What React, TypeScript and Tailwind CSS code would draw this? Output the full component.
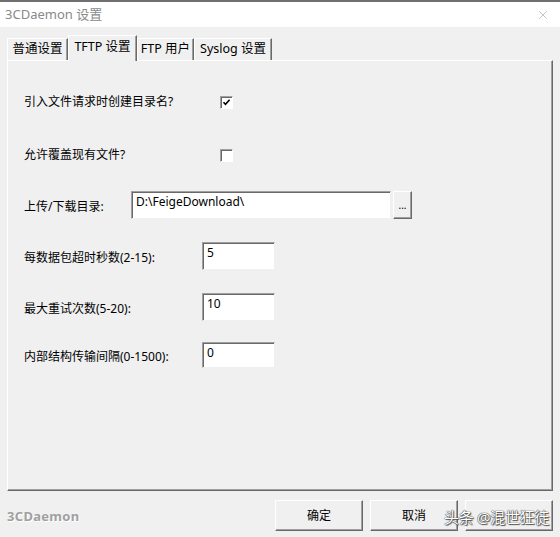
import { X } from 'lucide-react';

const font = "font-['Noto_Sans','Noto_Sans_CJK_SC',sans-serif]";

const tabs = [
  { label: '普通设置', w: 'w-[61px]', active: false },
  { label: 'TFTP 设置', w: 'w-[69px]', active: true },
  { label: 'FTP 用户', w: 'w-[57px]', active: false },
  { label: 'Syslog 设置', w: 'w-[78px]', active: false },
];

const numberFields = [
  { label: '每数据包超时秒数(2-15):', value: '5', cls: 'mt-[23px] h-[28px]' },
  { label: '最大重试次数(5-20):', value: '10', cls: 'mt-[23px] h-[28px]' },
  { label: '内部结构传输间隔(0-1500):', value: '0', cls: 'mt-[21px] h-[26px]' },
];

const Checkbox = ({ checked }: { checked: boolean }) => (
  <div className="w-[13px] h-[13px] bg-white border-t border-l border-t-[#a0a0a0] border-l-[#a0a0a0] border-b border-r border-b-[#ffffff] border-r-[#ffffff] shadow-[inset_1px_1px_0_#696969] flex items-center justify-center">
    {checked && (
      <svg width="9" height="9" viewBox="0 0 9 9">
        <path d="M1.5 4.2 L3.5 6.4 L7.6 1.8" stroke="#000" strokeWidth="1.6" fill="none" />
      </svg>
    )}
  </div>
);

const Field = ({ value, w }: { value: string; w: string }) => (
  <div className={`${w} h-full bg-white border-t border-l border-[#a0a0a0] border-b-[#f0f0f0] border-r-[#f0f0f0] border-b border-r shadow-[inset_1px_1px_0_#696969] pl-[4px] pt-[2px] text-[12px] text-black leading-[16px]`}>
    {value}
  </div>
);

const Button = ({ label, w }: { label: string; w: string }) => (
  <div className={`${w} h-[31px] flex items-center justify-center text-[12px] text-black border-t border-l border-t-white border-l-white border-b border-r border-b-[#696969] border-r-[#696969] shadow-[inset_-1px_-1px_0_#a0a0a0]`}>
    {label}
  </div>
);

export default function App() {
  return (
    <div className={`w-[560px] h-[537px] bg-[#f0f0f0] flex flex-col overflow-hidden relative ${font}`}>
      {/* title bar */}
      <div className="h-[27px] bg-white border-t-2 border-t-[#707070] flex items-center justify-between pl-[5px] pr-[10px]">
        <span className="text-[13px] text-[#8a8a8a]">3CDaemon 设置</span>
        <X size={14} strokeWidth={1} className="text-[#999]" />
      </div>

      {/* tab strip */}
      <div className="h-[33px] flex items-end pl-[7px]">
        {tabs.map((t) =>
          t.active ? (
            <div
              key={t.label}
              className={`${t.w} h-[26px] -mb-px z-10 bg-[#f0f0f0] border-t border-l border-t-white border-l-white border-r border-r-[#696969] shadow-[inset_-1px_0_0_#a0a0a0] flex items-start justify-center pt-[2px] text-[12.5px] text-black`}
            >
              {t.label}
            </div>
          ) : (
            <div
              key={t.label}
              className={`${t.w} h-[22px] border-t border-l border-t-white border-l-white border-r border-r-[#696969] shadow-[inset_-1px_0_0_#a0a0a0] flex items-center justify-center text-[12.5px] text-black`}
            >
              {t.label}
            </div>
          )
        )}
      </div>

      {/* panel */}
      <div className="mx-[7px] w-[546px] h-[431px] border-t border-l border-t-white border-l-white border-r border-b border-r-[#696969] border-b-[#696969] shadow-[inset_-1px_-1px_0_#a0a0a0] flex flex-col pl-[16px] pt-[29px] text-[12px] text-black">
        <div className="h-[24px] flex items-center">
          <span className="w-[196px]">引入文件请求时创建目录名?</span>
          <Checkbox checked />
        </div>
        <div className="mt-[29px] h-[24px] flex items-center">
          <span className="w-[196px]">允许覆盖现有文件?</span>
          <Checkbox checked={false} />
        </div>
        <div className="mt-[24px] h-[28px] flex items-center">
          <span className="w-[107px] pt-[3px]">上传/下载目录:</span>
          <Field value="D:\FeigeDownload\" w="w-[260px]" />
          <div className="ml-[2px] w-[19px] h-full flex items-center justify-center text-[10px] border-t border-l border-t-white border-l-white border-b border-r border-b-[#696969] border-r-[#696969] shadow-[inset_-1px_-1px_0_#a0a0a0]">
            ...
          </div>
        </div>
        {numberFields.map((f) => (
          <div key={f.label} className={`${f.cls} flex items-center`}>
            <span className="w-[178px] pt-[3px]">{f.label}</span>
            <Field value={f.value} w="w-[73px]" />
          </div>
        ))}
      </div>

      {/* footer */}
      <div className="flex items-center pl-[7px] pr-[7px] mt-[9px]">
        <span className="text-[13px] font-bold text-[#a0a0a0] [text-shadow:1px_1px_0_#ffffff] tracking-[0.3px] mt-[2px]">3CDaemon</span>
        <div className="ml-auto flex gap-[7px]">
          <Button label="确定" w="w-[88px]" />
          <Button label="取消" w="w-[88px]" />
          <Button label="" w="w-[88px]" />
        </div>
      </div>

      {/* watermark */}
      <div className="absolute left-[444px] top-[506px] whitespace-nowrap text-[15px] leading-[22px] text-white [text-shadow:0_0_1px_#333,0_0_1px_#333,1px_1px_1px_#555] tracking-[-0.3px]">
        头条 @混世狂徒
      </div>
    </div>
  );
}
